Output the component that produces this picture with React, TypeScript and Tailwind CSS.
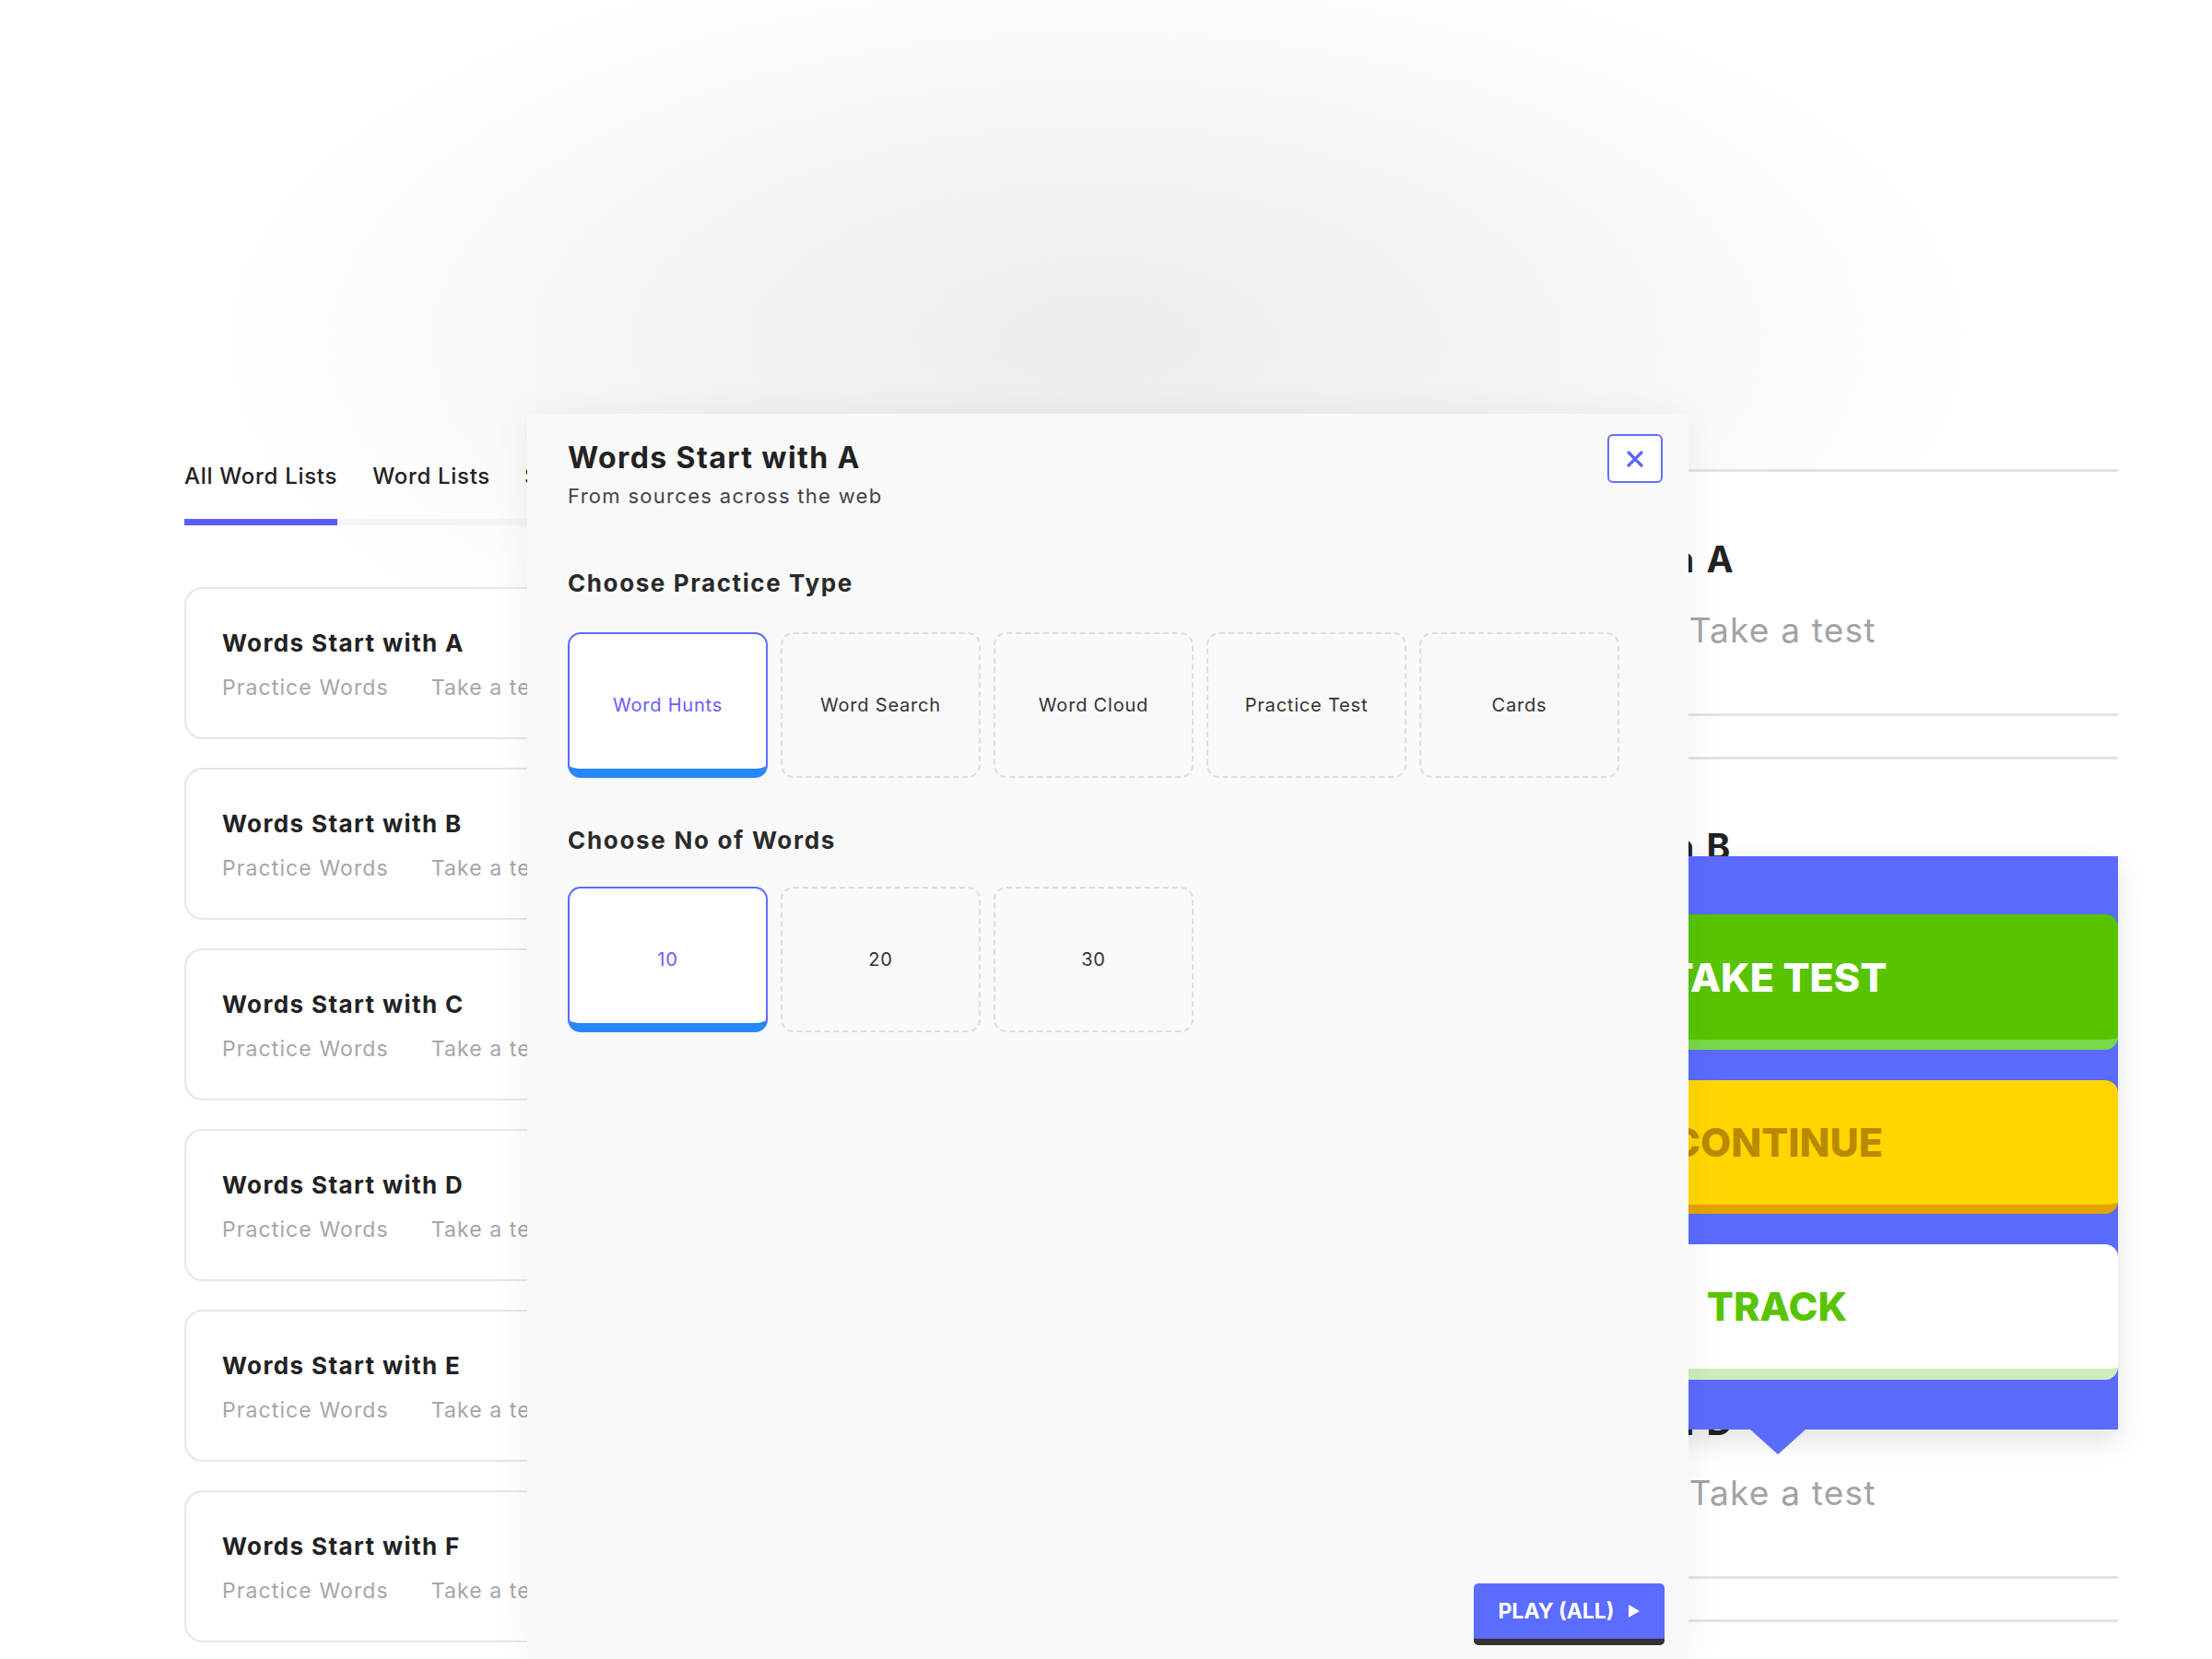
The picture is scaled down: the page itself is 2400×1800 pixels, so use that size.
import React from "react";

const leftCards = ["A", "B", "C", "D", "E", "F"];
const rightCards = ["A", "B", "C", "D", "E"];
const practiceTypes = ["Word Hunts", "Word Search", "Word Cloud", "Practice Test", "Cards"];
const counts = ["10", "20", "30"];

function OptionCard({ label, selected }: { label: string; selected: boolean }) {
  return selected ? (
    <div className="flex h-[158px] w-[217px] items-center justify-center rounded-[14px] border-2 border-b-[10px] border-[#5b6cff] border-b-[#2787ff] bg-white pt-[8px] text-[20px] tracking-[0.8px] text-[#6a5cff]">
      {label}
    </div>
  ) : (
    <div className="flex h-[158px] w-[217px] items-center justify-center rounded-[14px] border-2 border-dashed border-[#dddddd] text-[20px] tracking-[0.8px] text-[#333333]">
      {label}
    </div>
  );
}

export default function App() {
  return (
    <div className="relative h-[1800px] w-[2400px] overflow-hidden bg-white bg-[radial-gradient(ellipse_950px_440px_at_1190px_370px,#ededed_0%,#f3f3f3_45%,#ffffff_100%)] font-['Inter',sans-serif]">
      <div className="flex h-full">
        {/* Left column: tabs + list */}
        <div className="w-[1428px] shrink-0 pl-[200px] pt-[502px]">
          <div className="flex w-[1000px] items-start">
            <div className="h-[68px] border-b-[7px] border-[#5b5ff0] text-[24px] font-medium leading-[30px] tracking-[0.7px] text-[#222222]">
              All Word Lists
            </div>
            <div className="h-[68px] border-b-[7px] border-[#f4f4f4] pl-[38px] text-[24px] font-medium leading-[30px] tracking-[0.7px] text-[#222222]">
              Word Lists
            </div>
            <div className="h-[68px] border-b-[7px] border-[#f4f4f4] pl-[37px] text-[24px] font-medium leading-[30px] tracking-[0.7px] text-[#222222]">
              Spelling Lists
            </div>
            <div className="h-[68px] flex-1 border-b-[7px] border-[#f4f4f4]" />
          </div>
          <div className="mt-[67px] flex w-[1000px] flex-col gap-[31px]">
            {leftCards.map((l) => (
              <div
                key={l}
                className="h-[165px] rounded-[20px] border-2 border-[#e6e6e6] bg-white pl-[39px] pt-[43px]"
              >
                <div className="text-[26px] font-bold leading-[32px] tracking-[1.4px] text-[#222222]">Words Start with {l}</div>
                <div className="mt-[17px] flex gap-[46px] text-[23px] leading-[30px] tracking-[1.1px] text-[#a6a6a6]">
                  <span>Practice Words</span>
                  <span>Take a test</span>
                </div>
              </div>
            ))}
          </div>
        </div>

        {/* Right column: enlarged list */}
        <div className="w-[870px] shrink-0 pt-[509px]">
          <div className="flex flex-col gap-[44px]">
            {rightCards.map((l) => (
              <div key={l} className="h-[268px] border-y-[3px] border-[#e3e3e3] bg-white pl-[62px] pt-[71px]">
                <div className="text-[39px] font-bold leading-[48px] tracking-[2px] text-[#222222]">Words Start with {l}</div>
                <div className="mt-[30px] flex gap-[60px] text-[37px] leading-[46px] tracking-[1.2px] text-[#a3a3a3]">
                  <span>Practice Words</span>
                  <span>Take a test</span>
                </div>
              </div>
            ))}
          </div>
        </div>
      </div>

      {/* Popup menu over right list */}
      <div className="absolute left-[1558px] top-[929px] z-10 w-[740px] bg-[#5a6bfe] pb-[54px] pt-[63px] shadow-[0_12px_30px_rgba(0,0,0,0.12)]">
        <div className="flex flex-col gap-[33px]">
          <div className="flex h-[147px] items-center justify-center rounded-[14px] border-b-[11px] border-[#78d84a] bg-[#58c400] text-[43px] font-extrabold text-white">
            TAKE TEST
          </div>
          <div className="flex h-[145px] items-center justify-center rounded-[14px] border-b-[10px] border-[#e4a200] bg-[#ffd600] text-[43px] font-extrabold text-[#b98a00]">
            CONTINUE
          </div>
          <div className="flex h-[147px] items-center justify-center rounded-[14px] border-b-[12px] border-[#cdeebb] bg-white text-[43px] font-extrabold text-[#58c400]">
            TRACK
          </div>
        </div>
        <div className="absolute bottom-[-27px] left-[341px] h-0 w-0 border-x-[30px] border-t-[27px] border-x-transparent border-t-[#5a6bfe]" />
      </div>

      {/* Modal */}
      <div className="absolute bottom-0 left-[572px] top-[449px] z-20 flex w-[1260px] flex-col bg-[#f9f9f9] pl-[44px] pr-[26px] pt-[28px] shadow-[0_0_40px_rgba(0,0,0,0.06)]">
        <button className="absolute right-[28px] top-[22px] flex h-[53px] w-[60px] items-center justify-center rounded-[6px] border-2 border-[#5f6fff] bg-white">
          <svg width="20" height="20" viewBox="0 0 20 20" fill="none">
            <path d="M3 3L17 17M17 3L3 17" stroke="#5a68ff" strokeWidth="3.2" strokeLinecap="round" />
          </svg>
        </button>
        <div className="text-[32px] font-bold leading-[40px] tracking-[1.4px] text-[#222222]">Words Start with A</div>
        <div className="mt-[7px] text-[22px] leading-[28px] tracking-[1.3px] text-[#444444]">From sources across the web</div>

        <div className="mt-[65px] text-[26px] font-bold leading-[32px] tracking-[1.6px] text-[#2a2a2a]">Choose Practice Type</div>
        <div className="mt-[37px] flex gap-[14px]">
          {practiceTypes.map((t, i) => (
            <OptionCard key={t} label={t} selected={i === 0} />
          ))}
        </div>

        <div className="mt-[52px] text-[26px] font-bold leading-[32px] tracking-[1.7px] text-[#2a2a2a]">Choose No of Words</div>
        <div className="mt-[34px] flex gap-[14px]">
          {counts.map((c, i) => (
            <OptionCard key={c} label={c} selected={i === 0} />
          ))}
        </div>

        <div className="mb-[15px] mt-auto flex justify-end">
          <button className="flex h-[67px] w-[207px] items-center justify-center gap-[14px] rounded-[5px] border-b-[7px] border-[#333333] bg-[#5b6cff] text-[23px] font-bold text-white">
            <span>PLAY (ALL)</span>
            <svg width="14" height="16" viewBox="0 0 14 16">
              <path d="M1 1L13 8L1 15Z" fill="white" />
            </svg>
          </button>
        </div>
      </div>
    </div>
  );
}
